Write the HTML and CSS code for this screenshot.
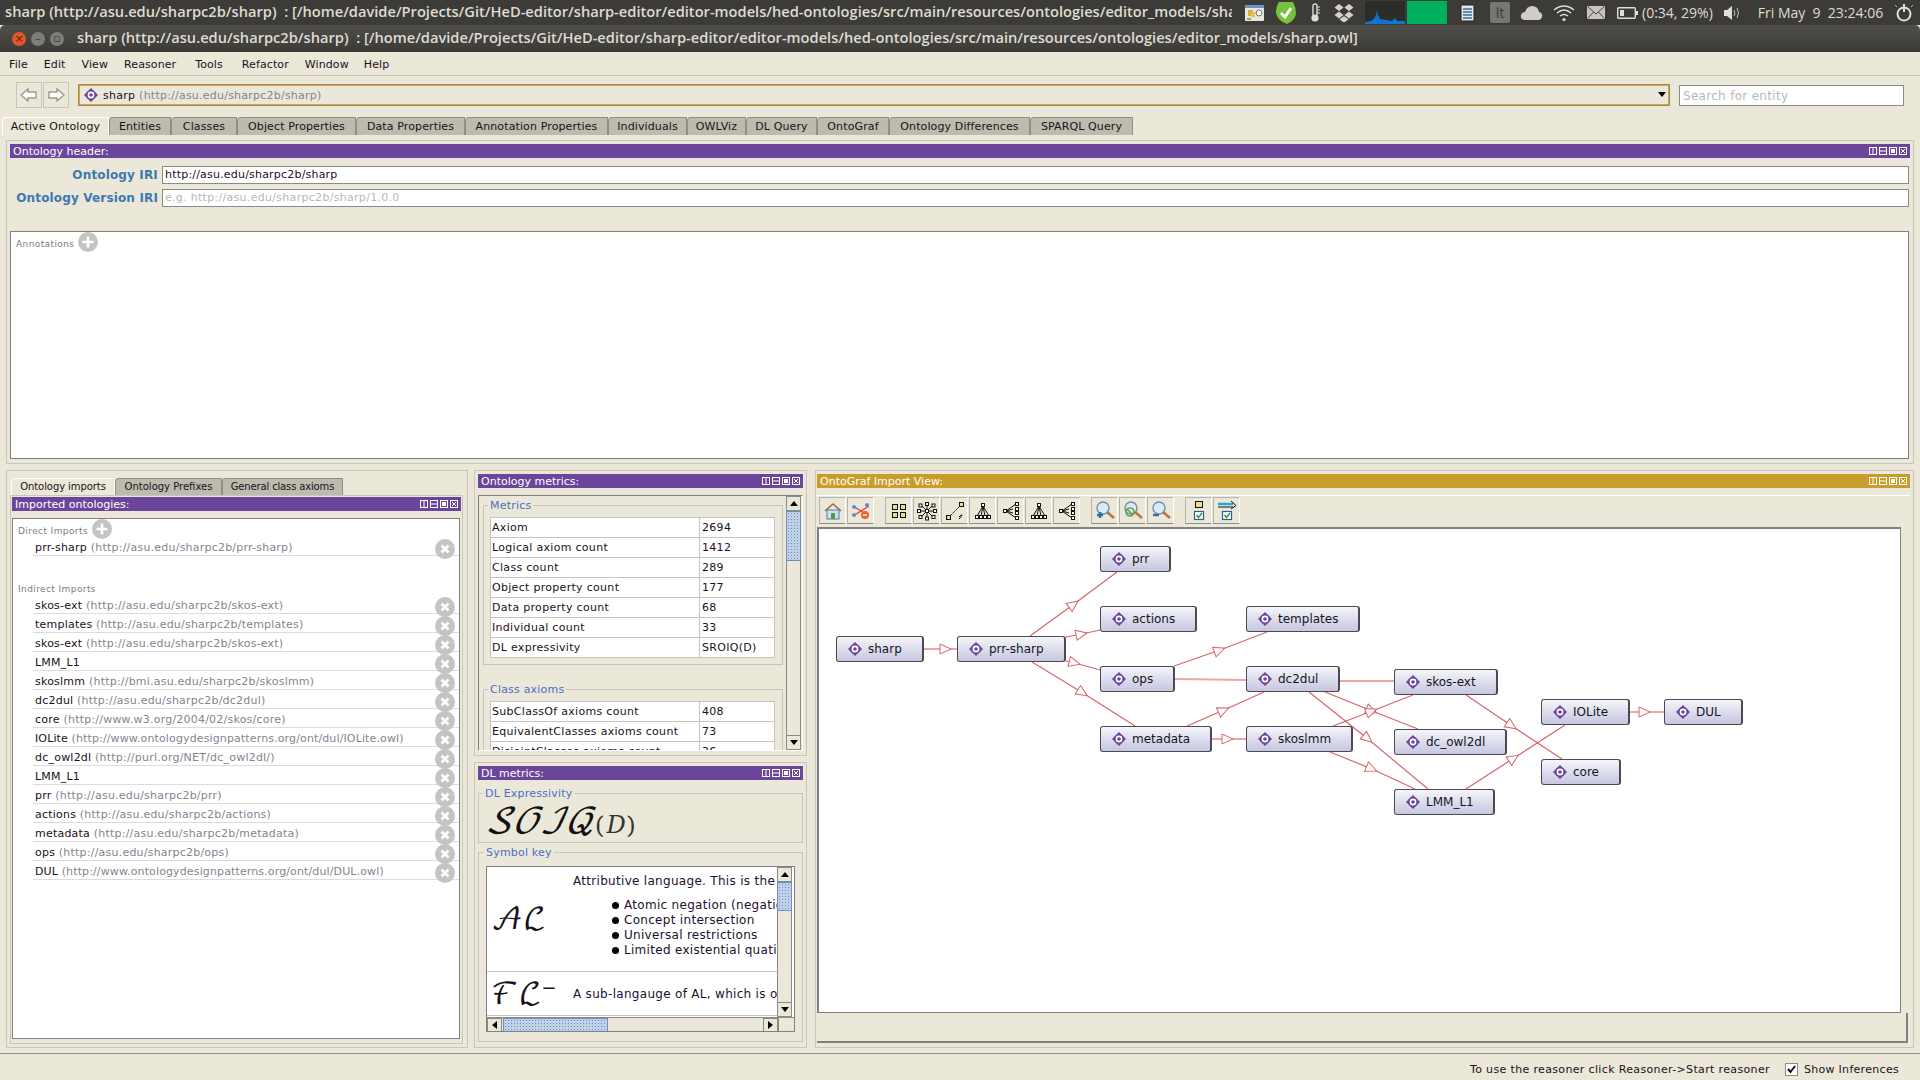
FILE: index.html
```html
<!DOCTYPE html>
<html lang="en">
<head>
    <meta charset="UTF-8">
    <title>sharp - Protege</title>
    <link rel="stylesheet" href="styles.css">
</head>
<body>
    <svg class="defs" width="0" height="0">
        <defs>
            <symbol id="onto" viewBox="0 0 14 14">
                <path d="M7 0L14 7L7 14L0 7Z" fill="#6b459b"/>
                <circle cx="7" cy="7" r="5" fill="#6b459b"/>
                <circle cx="7" cy="7" r="3.4" fill="#fff"/>
                <circle cx="7" cy="7" r="1.8" fill="#6b459b"/>
            </symbol>
            <symbol id="ctl" viewBox="0 0 40 10">
                <g fill="none" stroke="#fff">
                    <rect x="0.5" y="1.5" width="7" height="7"/><path d="M4 1.5V8.5"/>
                    <rect x="10.5" y="1.5" width="7" height="7"/><path d="M10.5 5H17.5"/>
                    <rect x="20.5" y="1.5" width="7" height="7"/><rect x="22.5" y="3.5" width="3" height="3" fill="#fff"/>
                    <rect x="30.5" y="1.5" width="7" height="7"/><path d="M32 3L36 7M36 3L32 7"/>
                </g>
            </symbol>
            <symbol id="plus" viewBox="0 0 20 20">
                <circle cx="10" cy="10" r="10" fill="#c4c4c4"/>
                <path d="M10 4.5V15.5M4.5 10H15.5" stroke="#fff" stroke-width="2.6"/>
            </symbol>
            <symbol id="del" viewBox="0 0 20 20">
                <circle cx="10" cy="10" r="10" fill="#c4c4c4"/>
                <path d="M6.5 6.5L13.5 13.5M13.5 6.5L6.5 13.5" stroke="#fff" stroke-width="2.6"/>
            </symbol>
            <symbol id="tree-v" viewBox="0 0 20 20">
                <g fill="#fff" stroke="#111">
                    <path d="M10 5L4 15M10 5L8 15M10 5L12 15M10 5L16 15" fill="none"/>
                    <rect x="8.5" y="2.5" width="3" height="3"/>
                    <rect x="2.5" y="14.5" width="3" height="3"/><rect x="6.5" y="14.5" width="3" height="3"/>
                    <rect x="10.5" y="14.5" width="3" height="3"/><rect x="14.5" y="14.5" width="3" height="3"/>
                </g>
            </symbol>
            <symbol id="tree-h" viewBox="0 0 20 20">
                <g fill="#fff" stroke="#111">
                    <path d="M5 10L15 3M5 10L12 8M5 10L12 12M5 10L15 17" fill="none"/>
                    <rect x="2.5" y="8.5" width="3" height="3"/>
                    <rect x="14.5" y="1.5" width="3" height="3"/><rect x="14.5" y="6.5" width="3" height="3"/>
                    <rect x="14.5" y="10.5" width="3" height="3"/><rect x="14.5" y="15.5" width="3" height="3"/>
                </g>
            </symbol>
            <marker id="head" markerUnits="userSpaceOnUse" markerWidth="14" markerHeight="12" viewBox="0 0 14 12" refX="7" refY="6" orient="auto">
                <path d="M1 1L12 6L1 11Z" fill="#fff" stroke="#d9636a"/>
            </marker>
        </defs>
    </svg>

    <div class="topbar">
        <div class="topbar-title">sharp (http://asu.edu/sharpc2b/sharp)&nbsp; : [/home/davide/Projects/Git/HeD-editor/sharp-editor/editor-models/hed-ontologies/src/main/resources/ontologies/editor_models/sharp.owl]</div>
        <div class="tray">
            <svg class="tray-cal" width="21" height="20" viewBox="0 0 21 20"><rect x="1" y="2" width="19" height="16" rx="1" fill="#e9e7dd"/><rect x="1" y="2" width="19" height="3" fill="#6d93c4"/><rect x="4" y="7" width="5" height="6" fill="#d6b13a"/><rect x="7" y="9" width="4" height="5" fill="#e5c64e"/><circle cx="15" cy="10" r="3" fill="#fff" stroke="#777"/><rect x="3" y="15" width="4" height="2" fill="#7ab648"/></svg>
            <svg class="tray-shield" width="22" height="24" viewBox="0 0 22 24"><path d="M4 1H18Q21 6 21 12Q21 19 12 23Q3 20 1 12Q1 5 4 1Z" fill="#78c13c"/><path d="M6 12L10 16L16 7" fill="none" stroke="#fff" stroke-width="3"/></svg>
            <svg class="tray-therm" width="10" height="20" viewBox="0 0 10 20"><rect x="3" y="1" width="4" height="13" rx="2" fill="#3c3b37" stroke="#ddd" stroke-width="1.4"/><circle cx="5" cy="15" r="3.6" fill="#ddd"/><path d="M7 4H10M7 7H10M7 10H10" stroke="#ddd"/></svg>
            <svg class="tray-drop" width="20" height="20" viewBox="0 0 20 20"><path d="M5 1L9.5 4.5L5 8L0.5 4.5ZM15 1L19.5 4.5L15 8L10.5 4.5ZM5 8.5L9.5 12L5 15.5L0.5 12ZM15 8.5L19.5 12L15 15.5L10.5 12ZM10 13L14.5 16.5L10 19.5L5.5 16.5Z" fill="#d6d4ca"/></svg>
            <svg class="tray-graph" width="40" height="23" viewBox="0 0 40 23"><rect width="40" height="23" fill="#2c2c2a"/><path d="M0 21L6 20L9 18L11 14L12 9L13 14L15 18L20 19L27 20L30 17L32 20L40 20V23H0Z" fill="#0a78d0"/></svg>
            <div class="tray-green"></div>
            <svg class="tray-doc" width="17" height="20" viewBox="0 0 17 20"><rect x="2" y="2" width="13" height="16" rx="1" fill="#e6e6e0" stroke="#222"/><path d="M4 6H13M4 9H13M4 12H13M4 15H13" stroke="#3a6ea5" stroke-width="1.5"/></svg>
            <div class="tray-lt">lt</div>
            <svg class="tray-cloud" width="23" height="16" viewBox="0 0 23 16"><path d="M5 15Q0 15 1 10Q2 7 5 7Q7 1 12 1Q18 1 19 7Q23 8 22 12Q21 15 18 15Z" fill="#cfcdc4"/></svg>
            <svg class="tray-wifi" width="22" height="18" viewBox="0 0 22 18"><g fill="none" stroke="#ddd" stroke-width="1.5"><path d="M1 6Q11 -2 21 6"/><path d="M4 9Q11 3 18 9"/><path d="M7 12Q11 9 15 12"/></g><circle cx="11" cy="15.5" r="1.6" fill="#ddd"/></svg>
            <svg class="tray-mail" width="18" height="13" viewBox="0 0 18 13"><rect width="18" height="13" fill="#c9c7bd"/><path d="M0.5 0.5L9 8L17.5 0.5M0.5 12.5L6.5 6M17.5 12.5L11.5 6" fill="none" stroke="#45443f"/></svg>
            <svg class="tray-batt" width="21" height="12" viewBox="0 0 21 12"><rect x="0.7" y="0.7" width="17.6" height="10.6" rx="1" fill="none" stroke="#ddd" stroke-width="1.4"/><rect x="3" y="3" width="4" height="6" fill="#ddd"/><rect x="19" y="4" width="2" height="4" fill="#ddd"/></svg>
            <span class="tray-text tray-pct">(0:34, 29%)</span>
            <svg class="tray-vol" width="19" height="18" viewBox="0 0 19 18"><path d="M1 6H4L9 2V16L4 12H1Z" fill="#ddd"/><path d="M11 6Q13 9 11 12M14 4Q17 9 14 14" fill="none" stroke="#bbb"/></svg>
            <span class="tray-text tray-clock">Fri May&nbsp; 9&nbsp; 23:24:06</span>
            <svg class="tray-power" width="20" height="20" viewBox="0 0 20 20"><circle cx="10" cy="11" r="6.5" fill="none" stroke="#ddd" stroke-width="2"/><path d="M10 1V9" stroke="#ddd" stroke-width="2"/><path d="M3 4L1 2M17 4L19 2" stroke="#bbb"/></svg>
        </div>
    </div>

    <div class="titlebar">
        <div class="win-btn win-close">×</div>
        <div class="win-btn win-min">–</div>
        <div class="win-btn win-max">▫</div>
        <div class="titlebar-text">sharp (http://asu.edu/sharpc2b/sharp)&nbsp; : [/home/davide/Projects/Git/HeD-editor/sharp-editor/editor-models/hed-ontologies/src/main/resources/ontologies/editor_models/sharp.owl]</div>
    </div>

    <div class="menubar">
        <span class="menu-item">File</span>
        <span class="menu-item">Edit</span>
        <span class="menu-item">View</span>
        <span class="menu-item">Reasoner</span>
        <span class="menu-item">Tools</span>
        <span class="menu-item">Refactor</span>
        <span class="menu-item">Window</span>
        <span class="menu-item">Help</span>
    </div>

    <div class="navbar">
        <div class="nav-btn"><svg width="18" height="14" viewBox="0 0 18 14"><path d="M1 7L8 1V4H16V10H8V13Z" fill="#fff" stroke="#9a9a90" stroke-width="1.4"/></svg></div>
        <div class="nav-btn"><svg width="18" height="14" viewBox="0 0 18 14"><path d="M17 7L10 1V4H2V10H10V13Z" fill="#fff" stroke="#9a9a90" stroke-width="1.4"/></svg></div>
        <div class="combo">
            <svg class="onto-icon" width="14" height="14"><use href="#onto"/></svg>
            <span class="combo-name">sharp</span>
            <span class="iri">(http://asu.edu/sharpc2b/sharp)</span>
            <span class="combo-arrow"></span>
        </div>
        <div class="search">Search for entity</div>
    </div>

    <div class="tabs main-tabs">
        <span class="tab tab-active tab-w1">Active Ontology</span>
        <span class="tab tab-w2">Entities</span>
        <span class="tab tab-w3">Classes</span>
        <span class="tab tab-w4">Object Properties</span>
        <span class="tab tab-w5">Data Properties</span>
        <span class="tab tab-w6">Annotation Properties</span>
        <span class="tab tab-w7">Individuals</span>
        <span class="tab tab-w8">OWLViz</span>
        <span class="tab tab-w9">DL Query</span>
        <span class="tab tab-w10">OntoGraf</span>
        <span class="tab tab-w11">Ontology Differences</span>
        <span class="tab tab-w12">SPARQL Query</span>
    </div>

    <section class="top-view">
        <div class="view-head">Ontology header:<svg class="ctl" width="40" height="10"><use href="#ctl"/></svg></div>
        <div class="iri-row first">
            <label class="iri-label">Ontology IRI</label>
            <div class="iri-input">http://asu.edu/sharpc2b/sharp</div>
        </div>
        <div class="iri-row">
            <label class="iri-label">Ontology Version IRI</label>
            <div class="iri-input placeholder">e.g. http://asu.edu/sharpc2b/sharp/1.0.0</div>
        </div>
        <div class="annotations">
            <span class="section-label">Annotations</span>
            <svg class="add" width="20" height="20"><use href="#plus"/></svg>
        </div>
    </section>

    <div class="lower">
        <div class="col-left">
            <div class="tabs small-tabs">
                <span class="tab tab-active tab-s1">Ontology imports</span>
                <span class="tab tab-s2">Ontology Prefixes</span>
                <span class="tab tab-s3">General class axioms</span>
            </div>
            <div class="imports-panel">
                <div class="view-head">Imported ontologies:<svg class="ctl" width="40" height="10"><use href="#ctl"/></svg></div>
                <div class="imports-list">
                    <div class="list-head"><span class="section-label">Direct Imports</span><svg class="add" width="20" height="20"><use href="#plus"/></svg></div>
                    <div class="import-row">prr-sharp <span class="iri">(http://asu.edu/sharpc2b/prr-sharp)</span><svg class="del" width="20" height="20"><use href="#del"/></svg></div>
                    <div class="list-head indirect"><span class="section-label">Indirect Imports</span></div>
                    <div class="import-row">skos-ext <span class="iri">(http://asu.edu/sharpc2b/skos-ext)</span><svg class="del" width="20" height="20"><use href="#del"/></svg></div>
                    <div class="import-row">templates <span class="iri">(http://asu.edu/sharpc2b/templates)</span><svg class="del" width="20" height="20"><use href="#del"/></svg></div>
                    <div class="import-row">skos-ext <span class="iri">(http://asu.edu/sharpc2b/skos-ext)</span><svg class="del" width="20" height="20"><use href="#del"/></svg></div>
                    <div class="import-row">LMM_L1<svg class="del" width="20" height="20"><use href="#del"/></svg></div>
                    <div class="import-row">skoslmm <span class="iri">(http://bmi.asu.edu/sharpc2b/skoslmm)</span><svg class="del" width="20" height="20"><use href="#del"/></svg></div>
                    <div class="import-row">dc2dul <span class="iri">(http://asu.edu/sharpc2b/dc2dul)</span><svg class="del" width="20" height="20"><use href="#del"/></svg></div>
                    <div class="import-row">core <span class="iri">(http://www.w3.org/2004/02/skos/core)</span><svg class="del" width="20" height="20"><use href="#del"/></svg></div>
                    <div class="import-row row-long">IOLite <span class="iri">(http://www.ontologydesignpatterns.org/ont/dul/IOLite.owl)</span><svg class="del" width="20" height="20"><use href="#del"/></svg></div>
                    <div class="import-row">dc_owl2dl <span class="iri">(http://purl.org/NET/dc_owl2dl/)</span><svg class="del" width="20" height="20"><use href="#del"/></svg></div>
                    <div class="import-row">LMM_L1<svg class="del" width="20" height="20"><use href="#del"/></svg></div>
                    <div class="import-row">prr <span class="iri">(http://asu.edu/sharpc2b/prr)</span><svg class="del" width="20" height="20"><use href="#del"/></svg></div>
                    <div class="import-row">actions <span class="iri">(http://asu.edu/sharpc2b/actions)</span><svg class="del" width="20" height="20"><use href="#del"/></svg></div>
                    <div class="import-row">metadata <span class="iri">(http://asu.edu/sharpc2b/metadata)</span><svg class="del" width="20" height="20"><use href="#del"/></svg></div>
                    <div class="import-row">ops <span class="iri">(http://asu.edu/sharpc2b/ops)</span><svg class="del" width="20" height="20"><use href="#del"/></svg></div>
                    <div class="import-row row-long">DUL <span class="iri">(http://www.ontologydesignpatterns.org/ont/dul/DUL.owl)</span><svg class="del" width="20" height="20"><use href="#del"/></svg></div>
                </div>
            </div>
        </div>

        <div class="col-mid">
            <section class="metrics-view">
                <div class="view-head">Ontology metrics:<svg class="ctl" width="40" height="10"><use href="#ctl"/></svg></div>
                <div class="metrics-scroll">
                    <div class="metrics-body">
                        <fieldset class="group">
                            <legend>Metrics</legend>
                            <table class="metric-table">
                                <tr><td>Axiom</td><td>2694</td></tr>
                                <tr><td>Logical axiom count</td><td>1412</td></tr>
                                <tr><td>Class count</td><td>289</td></tr>
                                <tr><td>Object property count</td><td>177</td></tr>
                                <tr><td>Data property count</td><td>68</td></tr>
                                <tr><td>Individual count</td><td>33</td></tr>
                                <tr><td>DL expressivity</td><td>SROIQ(D)</td></tr>
                            </table>
                        </fieldset>
                        <fieldset class="group group-next">
                            <legend>Class axioms</legend>
                            <table class="metric-table">
                                <tr><td>SubClassOf axioms count</td><td>408</td></tr>
                                <tr><td>EquivalentClasses axioms count</td><td>73</td></tr>
                                <tr><td>DisjointClasses axioms count</td><td>36</td></tr>
                            </table>
                        </fieldset>
                    </div>
                    <div class="vscroll vscroll-metrics">
                        <span class="sb-btn"><i class="tri-up"></i></span>
                        <span class="sb-thumb"></span>
                        <span class="sb-track"></span>
                        <span class="sb-btn"><i class="tri-down"></i></span>
                    </div>
                </div>
            </section>

            <section class="dl-view">
                <div class="view-head">DL metrics:<svg class="ctl" width="40" height="10"><use href="#ctl"/></svg></div>
                <fieldset class="group dl-expr">
                    <legend>DL Expressivity</legend>
                    <div class="formula">𝒮𝒪ℐ𝒬<span class="formula-d">(𝐷)</span></div>
                </fieldset>
                <fieldset class="group dl-key">
                    <legend>Symbol key</legend>
                    <div class="key-box">
                        <div class="key-main">
                            <div class="key-content">
                                <div class="key-row key-row-al">
                                    <div class="key-symbol">𝒜ℒ</div>
                                    <div class="key-text">
                                        <div>Attributive language. This is the base language which allows:</div>
                                        <ul class="key-list">
                                            <li>Atomic negation (negation of concept names)</li>
                                            <li>Concept intersection</li>
                                            <li>Universal restrictions</li>
                                            <li>Limited existential quatification</li>
                                        </ul>
                                    </div>
                                </div>
                                <div class="key-row key-row-fl">
                                    <div class="key-symbol">ℱℒ<sup class="key-sup">−</sup></div>
                                    <div class="key-text">A sub-langauge of AL, which is obtained from it</div>
                                </div>
                            </div>
                            <div class="vscroll vscroll-key">
                                <span class="sb-btn"><i class="tri-up"></i></span>
                                <span class="sb-thumb"></span>
                                <span class="sb-track"></span>
                                <span class="sb-btn"><i class="tri-down"></i></span>
                            </div>
                        </div>
                        <div class="hscroll">
                            <span class="sb-btn"><i class="tri-left"></i></span>
                            <span class="sb-thumb"></span>
                            <span class="sb-track"></span>
                            <span class="sb-btn"><i class="tri-right"></i></span>
                            <span class="sb-corner"></span>
                        </div>
                    </div>
                </fieldset>
            </section>
        </div>

        <section class="col-right">
            <div class="view-head gold">OntoGraf Import View:<svg class="ctl" width="40" height="10"><use href="#ctl"/></svg></div>
            <div class="graf-toolbar">
                <span class="tool"><svg width="20" height="20" viewBox="0 0 20 20"><path d="M2 10L10 3L18 10" fill="none" stroke="#a86a3a" stroke-width="1.6"/><rect x="4" y="9" width="12" height="9" fill="#cfe0ef" stroke="#4d7fa8"/><rect x="8" y="12" width="4" height="6" fill="#4a9a55"/></svg></span>
                <span class="tool tool-gap"><svg width="20" height="20" viewBox="0 0 20 20"><path d="M2 5L18 15M2 15L18 5" stroke="#e0403a" stroke-width="1.3"/><circle cx="3" cy="6" r="2" fill="#5a8fd0"/><circle cx="3" cy="14" r="2" fill="#5a8fd0"/><circle cx="16" cy="4" r="2" fill="#5a8fd0"/><circle cx="14" cy="14" r="4" fill="#e8662a"/><path d="M12 14H16" stroke="#fff" stroke-width="1.4"/></svg></span>
                <span class="tool"><svg width="20" height="20" viewBox="0 0 20 20"><g fill="#e6e08c" stroke="#111"><rect x="3.5" y="3.5" width="5" height="5"/><rect x="11.5" y="3.5" width="5" height="5"/><rect x="3.5" y="11.5" width="5" height="5"/><rect x="11.5" y="11.5" width="5" height="5"/></g></svg></span>
                <span class="tool"><svg width="20" height="20" viewBox="0 0 20 20"><path d="M10 10L10 2M10 10L16 4M10 10L18 10M10 10L16 16M10 10L10 18M10 10L4 16M10 10L2 10M10 10L4 4" stroke="#111"/><g fill="#fff" stroke="#111"><rect x="8.5" y="8.5" width="3" height="3"/><rect x="8.5" y="1.5" width="3" height="3"/><rect x="15" y="3" width="3" height="3"/><rect x="16.5" y="8.5" width="3" height="3"/><rect x="15" y="14.5" width="3" height="3"/><rect x="8.5" y="16" width="3" height="3"/><rect x="2" y="14.5" width="3" height="3"/><rect x="0.5" y="8.5" width="3" height="3"/><rect x="2" y="3" width="3" height="3"/></g></svg></span>
                <span class="tool"><svg width="20" height="20" viewBox="0 0 20 20"><path d="M4 16L16 4" stroke="#111" stroke-dasharray="2 1"/><g fill="#e6e08c" stroke="#111"><rect x="1.5" y="14.5" width="4" height="4"/><rect x="14.5" y="1.5" width="4" height="4"/></g><path d="M14 16Q17 13 17 14T14 18" fill="none" stroke="#111"/></svg></span>
                <span class="tool"><svg width="20" height="20"><use href="#tree-v"/></svg></span>
                <span class="tool"><svg width="20" height="20"><use href="#tree-h"/></svg></span>
                <span class="tool"><svg width="20" height="20"><use href="#tree-v"/></svg></span>
                <span class="tool tool-gap"><svg width="20" height="20"><use href="#tree-h"/></svg></span>
                <span class="tool"><svg width="22" height="22" viewBox="0 0 22 22"><circle cx="9" cy="8" r="6" fill="#dbe9f5" stroke="#6f8fae" stroke-width="1.4"/><path d="M13 12L20 18" stroke="#b8763a" stroke-width="2.6"/><path d="M3 15H9M6 12V18" stroke="#2f6fb0" stroke-width="2.4"/></svg></span>
                <span class="tool"><svg width="22" height="22" viewBox="0 0 22 22"><circle cx="9" cy="8" r="6" fill="#dbe9f5" stroke="#6f8fae" stroke-width="1.4"/><path d="M13 12L20 18" stroke="#b8763a" stroke-width="2.6"/><circle cx="8" cy="12" r="4" fill="none" stroke="#6f9a4a" stroke-width="1.6"/><path d="M5 9L11 15" stroke="#6f9a4a" stroke-width="1.4"/></svg></span>
                <span class="tool tool-gap"><svg width="22" height="22" viewBox="0 0 22 22"><circle cx="9" cy="8" r="6" fill="#dbe9f5" stroke="#6f8fae" stroke-width="1.4"/><path d="M13 12L20 18" stroke="#b8763a" stroke-width="2.6"/><path d="M3 15H9" stroke="#2f6fb0" stroke-width="2.4"/></svg></span>
                <span class="tool"><svg width="20" height="22" viewBox="0 0 20 22"><rect x="6.5" y="1.5" width="7" height="6" fill="#e6e08c" stroke="#111"/><rect x="5.5" y="11.5" width="9" height="8" fill="#fff" stroke="#2a5f95" stroke-width="1.2"/><path d="M7.5 15L9.5 17.5L13 13" fill="none" stroke="#2f9a3a" stroke-width="1.4"/></svg></span>
                <span class="tool"><svg width="20" height="22" viewBox="0 0 20 22"><path d="M1 4H16" stroke="#19a8d8" stroke-width="2.4"/><path d="M1 7H16M14 1L19 5.5L14 9" fill="none" stroke="#111"/><rect x="5.5" y="11.5" width="9" height="8" fill="#fff" stroke="#2a5f95" stroke-width="1.2"/><path d="M7.5 15L9.5 17.5L13 13" fill="none" stroke="#2f9a3a" stroke-width="1.4"/></svg></span>
            </div>
            <div class="graf-canvas">
                <svg class="graf-edges" width="1081" height="483" viewBox="819 529 1081 483">
                    <g class="edges-pale">
                        <polyline points="924,649 946,649 957,649" marker-mid="url(#head)"/>
                        <polyline points="1340,681 1394,681"/>
                        <polyline points="1212,739 1228,739 1246,739" marker-mid="url(#head)"/>
                        <polyline points="1630,712 1645,712 1664,712" marker-mid="url(#head)"/>
                        <polyline points="1175,679 1246,680"/>
                    </g>
                    <g class="edges">
                        <polyline points="1030,636 1074,604 1117,572" marker-mid="url(#head)"/>
                        <polyline points="1066,637 1082,634 1100,630" marker-mid="url(#head)"/>
                        <polyline points="1066,661 1075,663 1100,670" marker-mid="url(#head)"/>
                        <polyline points="1032,662 1083,693 1135,726" marker-mid="url(#head)"/>
                        <polyline points="1174,666 1220,650 1267,632" marker-mid="url(#head)"/>
                        <polyline points="1325,692 1372,711 1418,729" marker-mid="url(#head)"/>
                        <polyline points="1309,692 1368,739 1428,789" marker-mid="url(#head)"/>
                        <polyline points="1187,726 1224,710 1264,692" marker-mid="url(#head)"/>
                        <polyline points="1333,726 1372,711 1413,695" marker-mid="url(#head)"/>
                        <polyline points="1330,752 1372,769 1415,789" marker-mid="url(#head)"/>
                        <polyline points="1466,695 1512,726 1562,759" marker-mid="url(#head)"/>
                        <polyline points="1466,789 1514,758 1565,725" marker-mid="url(#head)"/>
                    </g>
                </svg>
                <div class="node n-sharp"><svg class="node-icon" width="14" height="14"><use href="#onto"/></svg>sharp</div>
                <div class="node n-prr-sharp"><svg class="node-icon" width="14" height="14"><use href="#onto"/></svg>prr-sharp</div>
                <div class="node n-prr"><svg class="node-icon" width="14" height="14"><use href="#onto"/></svg>prr</div>
                <div class="node n-actions"><svg class="node-icon" width="14" height="14"><use href="#onto"/></svg>actions</div>
                <div class="node n-templates"><svg class="node-icon" width="14" height="14"><use href="#onto"/></svg>templates</div>
                <div class="node n-ops"><svg class="node-icon" width="14" height="14"><use href="#onto"/></svg>ops</div>
                <div class="node n-dc2dul"><svg class="node-icon" width="14" height="14"><use href="#onto"/></svg>dc2dul</div>
                <div class="node n-metadata"><svg class="node-icon" width="14" height="14"><use href="#onto"/></svg>metadata</div>
                <div class="node n-skoslmm"><svg class="node-icon" width="14" height="14"><use href="#onto"/></svg>skoslmm</div>
                <div class="node n-skos-ext"><svg class="node-icon" width="14" height="14"><use href="#onto"/></svg>skos-ext</div>
                <div class="node n-owl2dl"><svg class="node-icon" width="14" height="14"><use href="#onto"/></svg>dc_owl2dl</div>
                <div class="node n-lmm"><svg class="node-icon" width="14" height="14"><use href="#onto"/></svg>LMM_L1</div>
                <div class="node n-iolite"><svg class="node-icon" width="14" height="14"><use href="#onto"/></svg>IOLite</div>
                <div class="node n-core"><svg class="node-icon" width="14" height="14"><use href="#onto"/></svg>core</div>
                <div class="node n-dul"><svg class="node-icon" width="14" height="14"><use href="#onto"/></svg>DUL</div>
            </div>
            <div class="graf-foot"></div>
        </section>
    </div>

    <div class="statusbar">
        <span class="status-text">To use the reasoner click Reasoner-&gt;Start reasoner</span>
        <span class="check"><svg width="9" height="9" viewBox="0 0 9 9"><path d="M1 4L3.5 7L8 1" fill="none" stroke="#111" stroke-width="2"/></svg></span>
        <span class="status-text status-check-label">Show Inferences</span>
    </div>
</body>
</html>
```

FILE: styles.css
```css
html, body {
    margin: 0;
    padding: 0;
}

body {
    width: 1920px;
    height: 1080px;
    overflow: hidden;
    background-color: #ebe8d9;
    color: #1a1020;
    font-family: "DejaVu Sans", sans-serif;
    font-size: 11px;
}

.defs {
    position: absolute;
}

/* desktop panel */
.topbar {
    display: flex;
    height: 25px;
    background-color: #3c3b37;
    color: #dfdbd2;
    font-family: "Open Sans", sans-serif;
}

.topbar-title {
    width: 1232px;
    padding-left: 5px;
    box-sizing: border-box;
    overflow: hidden;
    white-space: nowrap;
    font-size: 14.65px;
    font-weight: 600;
    line-height: 22px;
}

.tray {
    display: flex;
    align-items: center;
    flex: 1;
    height: 25px;
}

.tray-cal { margin-left: 12px; }
.tray-shield { margin-left: 10px; }
.tray-therm { margin-left: 13px; }
.tray-drop { margin-left: 14px; }
.tray-graph { margin-left: 11px; }
.tray-green {
    width: 40px;
    height: 23px;
    margin-left: 2px;
    background-color: #00b05c;
}
.tray-doc { margin-left: 12px; }
.tray-lt {
    width: 20px;
    height: 21px;
    margin-left: 14px;
    background-color: #77766f;
    border-radius: 2px;
    color: #3c3b37;
    font-size: 14px;
    line-height: 21px;
    text-align: center;
}
.tray-cloud { margin-left: 10px; }
.tray-wifi { margin-left: 10px; }
.tray-mail { margin-left: 12px; }
.tray-batt { margin-left: 12px; }
.tray-text {
    font-size: 14px;
    white-space: nowrap;
}
.tray-pct { margin-left: 4px; }
.tray-vol { margin-left: 10px; }
.tray-clock { margin-left: 16px; }
.tray-power { margin-left: 11px; }

/* window title */
.titlebar {
    display: flex;
    align-items: center;
    height: 27px;
    box-sizing: border-box;
    border-radius: 5px 5px 0 0;
    background: linear-gradient(#4f4e49, #3b3a36);
}

.win-btn {
    width: 14px;
    height: 14px;
    margin-left: 5px;
    border-radius: 50%;
    background-color: #7d7c76;
    color: #3c3b37;
    font-size: 11px;
    line-height: 13px;
    text-align: center;
}

.win-close {
    margin-left: 12px;
    background-color: #e0562b;
    color: #5c2210;
}

.titlebar-text {
    margin: 0 0 3px 13px;
    color: #dfdbd2;
    font-family: "Open Sans", sans-serif;
    font-size: 14.65px;
    font-weight: 600;
    white-space: nowrap;
}

/* menu and navigation */
.menubar {
    display: flex;
    align-items: center;
    height: 24px;
    box-sizing: border-box;
    border-bottom: 1px solid #c8c6b8;
    padding: 1px 0 0 9px;
}

.menu-item {
    margin-right: 16px;
    letter-spacing: .1px;
}

.menu-item:nth-child(4), .menu-item:nth-child(5) {
    margin-right: 19px;
}

.menu-item:nth-child(7) {
    margin-right: 15px;
}

.navbar {
    display: flex;
    align-items: flex-start;
    height: 41px;
    box-sizing: border-box;
    padding: 6px 16px 0 16px;
}

.nav-btn {
    display: flex;
    align-items: center;
    justify-content: center;
    width: 26px;
    height: 26px;
    margin-right: 1px;
    box-sizing: border-box;
    border: 1px solid #c8c6b8;
}

.combo {
    display: flex;
    align-items: center;
    width: 1590px;
    height: 20px;
    margin: 3px 0 0 9px;
    box-sizing: border-box;
    border: 1px solid #e8a31c;
    outline: 1px solid #8b8b85;
    position: relative;
    letter-spacing: .23px;
}

.onto-icon {
    margin: 0 5px 0 4px;
}

.combo-name {
    margin-right: 4px;
}

.iri {
    color: #848490;
}

.combo-arrow {
    position: absolute;
    right: 2px;
    top: 6px;
    border-left: 4px solid transparent;
    border-right: 4px solid transparent;
    border-top: 5px solid #000;
}

.search {
    width: 225px;
    height: 21px;
    margin: 3px 0 0 10px;
    padding-left: 3px;
    box-sizing: border-box;
    border: 1px solid #8b8b85;
    background-color: #fff;
    color: #b8b8b8;
    font-size: 12px;
    letter-spacing: .3px;
    line-height: 20px;
}

/* tabs */
.tabs {
    display: flex;
}

.main-tabs {
    height: 18px;
    padding-left: 2px;
    letter-spacing: .12px;
}

.tab {
    box-sizing: border-box;
    border: 1px solid #8f8f86;
    border-bottom: none;
    border-radius: 4px 0 0 0;
    background-color: #bcbbad;
    text-align: center;
    white-space: nowrap;
}

.main-tabs .tab {
    height: 18px;
    line-height: 17px;
}

.tab-active {
    background-color: #ebe8d9;
    border-color: #fff;
}

.tab-w1 { width: 107px; }
.tab-w2 { width: 62px; }
.tab-w3 { width: 66px; }
.tab-w4 { width: 119px; }
.tab-w5 { width: 109px; }
.tab-w6 { width: 143px; }
.tab-w7 { width: 79px; }
.tab-w8 { width: 59px; }
.tab-w9 { width: 71px; }
.tab-w10 { width: 72px; }
.tab-w11 { width: 141px; }
.tab-w12 { width: 103px; }

/* active ontology header */
.top-view {
    height: 324px;
    margin: 5px 6px 0;
    padding: 3px;
    box-sizing: border-box;
    border: 1px solid #c8c6b8;
}

.view-head {
    display: flex;
    align-items: center;
    justify-content: space-between;
    height: 14px;
    padding: 0 1px 0 3px;
    background-color: #6b459b;
    color: #fff;
}

.view-head.gold {
    background-color: #c89d2a;
}

.iri-row {
    display: flex;
    align-items: center;
    margin-top: 5px;
    padding-right: 1px;
}

.iri-row.first {
    margin-top: 8px;
}

.iri-label {
    width: 148px;
    flex: none;
    color: #3d78b0;
    font-size: 12px;
    font-weight: bold;
    letter-spacing: .15px;
    text-align: right;
    white-space: nowrap;
}

.iri-input {
    flex: 1;
    height: 18px;
    margin-left: 4px;
    padding-left: 2px;
    box-sizing: border-box;
    border: 1px solid #8b8b85;
    background-color: #fff;
    letter-spacing: .2px;
    line-height: 16px;
}

.iri-input.placeholder {
    color: #b8b8b8;
    letter-spacing: .3px;
}

.annotations {
    display: flex;
    align-items: flex-start;
    height: 228px;
    margin: 24px 1px 0 0;
    padding: 0 0 0 5px;
    box-sizing: border-box;
    border: 1px solid #808080;
    background-color: #fff;
}

.section-label {
    margin-top: 7px;
    color: #7c7c7c;
    font-size: 9px;
    letter-spacing: .4px;
}

.add {
    margin-left: 4px;
}

/* lower splits */
.lower {
    display: flex;
    height: 578px;
    margin-top: 6px;
    padding: 0 6px;
}

.col-left {
    width: 462px;
    padding-top: 7px;
    box-sizing: border-box;
    border: 1px solid #c8c6b8;
}

.small-tabs {
    height: 17px;
    padding-left: 4px;
    font-size: 10px;
}

.small-tabs .tab {
    height: 17px;
    line-height: 16px;
}

.tab-s1 { width: 104px; letter-spacing: -.08px; }
.tab-s2 { width: 107px; }
.tab-s3 { width: 121px; letter-spacing: -.15px; }

.imports-panel {
    height: 549px;
    margin: 0 4px 0 3px;
    padding: 1px;
    box-sizing: border-box;
    border: 1px solid #c8c6b8;
}

.imports-list {
    height: 521px;
    margin-top: 7px;
    margin-right: 1px;
    box-sizing: border-box;
    border: 1px solid #808080;
    background-color: #fff;
}

.list-head {
    display: flex;
    align-items: flex-start;
    height: 18px;
    padding-left: 5px;
}

.list-head.indirect {
    height: 39px;
    padding-top: 21px;
    box-sizing: border-box;
}

.import-row {
    position: relative;
    height: 19px;
    margin-left: 20px;
    padding: 1px 0 0 2px;
    box-sizing: border-box;
    border-bottom: 1px solid #dcdcdc;
    letter-spacing: .22px;
    line-height: 19px;
    white-space: nowrap;
}

.row-long {
    letter-spacing: .13px;
}

.del {
    position: absolute;
    right: 4px;
    top: 2px;
}

.col-mid {
    display: flex;
    flex-direction: column;
    width: 333px;
    margin-left: 6px;
}

.metrics-view {
    height: 286px;
    padding: 3px;
    box-sizing: border-box;
    border: 1px solid #c8c6b8;
}

.metrics-scroll {
    display: flex;
    height: 256px;
    margin-top: 7px;
    box-sizing: border-box;
    border: 1px solid #808080;
    border-right-color: #fff;
    border-bottom-color: #fff;
}

.metrics-body {
    width: 307px;
    height: 254px;
    padding: 3px 3px 0 4px;
    box-sizing: border-box;
    overflow: hidden;
}

.group {
    margin: 0;
    padding: 0 6px 6px;
    border: 1px solid #c4c4c0;
}

.group legend {
    margin-left: -2px;
    padding: 0 2px;
    color: #4a6fc4;
    font-size: 11px;
    letter-spacing: .2px;
}

.group-next {
    margin-top: 18px;
}

.metric-table {
    width: 285px;
    border-collapse: collapse;
    background-color: #fff;
    margin-top: 5px;
    letter-spacing: .3px;
}

.metric-table td {
    height: 19px;
    padding: 0 0 0 1px;
    border: 1px solid #c4c4c0;
}

.metric-table td:first-child {
    width: 207px;
}

.metric-table td:last-child {
    padding-left: 2px;
}

.vscroll {
    display: flex;
    flex-direction: column;
    width: 15px;
}

.sb-btn {
    display: flex;
    align-items: center;
    justify-content: center;
    flex: none;
    width: 15px;
    height: 15px;
    box-sizing: border-box;
    border: 1px solid #8b8b85;
}

.sb-thumb {
    flex: none;
    height: 50px;
    box-sizing: border-box;
    border: 1px solid #6a8fc8;
    background-color: #c1d2e8;
    background-image: radial-gradient(#6a8fc8 30%, transparent 35%);
    background-size: 3px 3px;
    background-repeat: repeat;
    background-clip: padding-box;
}

.sb-track {
    flex: 1;
    border-left: 1px solid #8b8b85;
    border-right: 1px solid #8b8b85;
}

.tri-up, .tri-down, .tri-left, .tri-right {
    display: block;
    width: 0;
    height: 0;
    border: 4px solid transparent;
}

.tri-up { border-bottom: 5px solid #000; border-top: none; }
.tri-down { border-top: 5px solid #000; border-bottom: none; }
.tri-left { border-right: 5px solid #000; border-left: none; }
.tri-right { border-left: 5px solid #000; border-right: none; }

/* dl metrics */
.dl-view {
    height: 286px;
    margin-top: 6px;
    padding: 3px;
    box-sizing: border-box;
    border: 1px solid #c8c6b8;
}

.dl-expr {
    height: 56px;
    margin-top: 7px;
    padding: 0 6px;
    box-sizing: border-box;
}

.formula {
    height: 36px;
    padding-top: 6px;
    box-sizing: border-box;
    font-family: "DejaVu Math TeX Gyre", "Liberation Serif", serif;
    font-size: 35px;
    font-style: italic;
    line-height: 34px;
    color: #111;
}

.formula-d {
    font-size: 24px;
    font-style: normal;
    color: #333;
}

.dl-key {
    height: 196px;
    margin-top: 3px;
    padding: 0 7px 7px;
    box-sizing: border-box;
}

.key-box {
    height: 166px;
    margin-top: 7px;
    box-sizing: border-box;
    border: 1px solid #808080;
    background-color: #fff;
    overflow: hidden;
}

.key-main {
    display: flex;
    height: 150px;
}

.key-content {
    width: 290px;
    overflow: hidden;
}

.key-row {
    display: flex;
    box-sizing: border-box;
    border-bottom: 1px solid #c4c4c0;
    white-space: nowrap;
}

.key-row-al {
    height: 105px;
    align-items: center;
}

.key-row-fl {
    height: 44px;
    align-items: center;
}

.key-symbol {
    width: 86px;
    flex: none;
    padding: 2px 0 0 4px;
    box-sizing: border-box;
    font-family: "DejaVu Math TeX Gyre", "Liberation Serif", serif;
    font-size: 30px;
}

.key-sup {
    font-size: 18px;
    line-height: 0;
}

.key-text {
    font-size: 12px;
    color: #220f2e;
    letter-spacing: .3px;
}

.key-list {
    margin: 10px 0 0;
    padding: 0 0 6px 51px;
    list-style: none;
}

.key-list li {
    position: relative;
    line-height: 15px;
}

.key-list li::before {
    content: "";
    position: absolute;
    left: -12px;
    top: 4px;
    width: 7px;
    height: 7px;
    border-radius: 50%;
    background-color: #000;
}

.vscroll-key {
    background-color: #ebe8d9;
}

.vscroll-key .sb-thumb {
    height: 29px;
}

.hscroll {
    display: flex;
    height: 15px;
    box-sizing: border-box;
    background-color: #ebe8d9;
    border-top: 1px solid #8b8b85;
}

.hscroll .sb-btn {
    height: 14px;
}

.hscroll .sb-thumb {
    width: 105px;
    height: 14px;
    margin-left: 1px;
}

.hscroll .sb-track {
    flex: 1;
    border: none;
}

.sb-corner {
    width: 15px;
    border-left: 1px solid #8b8b85;
}

/* ontograf */
.col-right {
    flex: 1;
    margin-left: 8px;
    padding: 3px 3px 3px 1px;
    box-sizing: border-box;
    border: 1px solid #c8c6b8;
}

.graf-toolbar {
    display: flex;
    align-items: flex-start;
    height: 32px;
    margin-top: 7px;
    padding: 1px 0 0 2px;
    box-sizing: border-box;
    border-top: 1px solid #fff;
}

.tool {
    display: flex;
    align-items: center;
    justify-content: center;
    width: 27px;
    height: 27px;
    margin-right: 1px;
    box-sizing: border-box;
    border: 1px solid #b4b4a8;
    border-right-color: #fff;
    border-bottom-color: #8f8f86;
}

.tool-gap {
    margin-right: 11px;
}

.graf-canvas {
    position: relative;
    width: 1084px;
    height: 486px;
    box-sizing: border-box;
    border-top: 2px solid #808080;
    border-left: 2px solid #808080;
    border-right: 1px solid #808080;
    border-bottom: 1px solid #808080;
    background-color: #fff;
    overflow: hidden;
}

.graf-edges {
    position: absolute;
    left: 0;
    top: 0;
}

.edges polyline, .edges-pale polyline {
    fill: none;
    stroke-width: 1.2;
    stroke: #d9636a;
}

.edges-pale polyline {
    stroke: #eaa6a9;
    stroke-width: 2;
}

.node {
    position: absolute;
    display: flex;
    align-items: center;
    height: 26px;
    padding: 0 0 1px 11px;
    box-sizing: border-box;
    border: 1px solid #4a4a52;
    border-right-width: 2px;
    border-radius: 3px;
    background: linear-gradient(#f5f5fa, #c6c6e0);
    color: #16161e;
    font-size: 12px;
    white-space: nowrap;
}

.node-icon {
    margin-right: 6px;
}

.n-sharp { left: 17px; top: 107px; width: 88px; }
.n-prr-sharp { left: 138px; top: 107px; width: 109px; }
.n-prr { left: 281px; top: 17px; width: 71px; }
.n-actions { left: 281px; top: 77px; width: 97px; }
.n-templates { left: 427px; top: 77px; width: 114px; }
.n-ops { left: 281px; top: 137px; width: 75px; }
.n-dc2dul { left: 427px; top: 137px; width: 94px; }
.n-metadata { left: 281px; top: 197px; width: 112px; }
.n-skoslmm { left: 427px; top: 197px; width: 107px; }
.n-skos-ext { left: 575px; top: 140px; width: 104px; }
.n-owl2dl { left: 575px; top: 200px; width: 113px; }
.n-lmm { left: 575px; top: 260px; width: 101px; }
.n-iolite { left: 722px; top: 170px; width: 89px; }
.n-core { left: 722px; top: 230px; width: 80px; }
.n-dul { left: 845px; top: 170px; width: 79px; }

.graf-foot {
    height: 30px;
    width: 1091px;
    box-sizing: border-box;
    border-right: 2px solid #808080;
    border-bottom: 2px solid #808080;
}

/* status */
.statusbar {
    display: flex;
    align-items: center;
    justify-content: flex-end;
    height: 27px;
    margin-top: 5px;
    padding: 4px 21px 0 0;
    box-sizing: border-box;
    border-top: 1px solid #8f8f86;
}

.status-text {
    letter-spacing: .35px;
}

.status-check-label {
    letter-spacing: .3px;
}

.check {
    display: flex;
    align-items: center;
    justify-content: center;
    width: 11px;
    height: 11px;
    margin: 0 6px 0 15px;
    border: 1px solid #8b8b85;
    background-color: #fff;
}
```
